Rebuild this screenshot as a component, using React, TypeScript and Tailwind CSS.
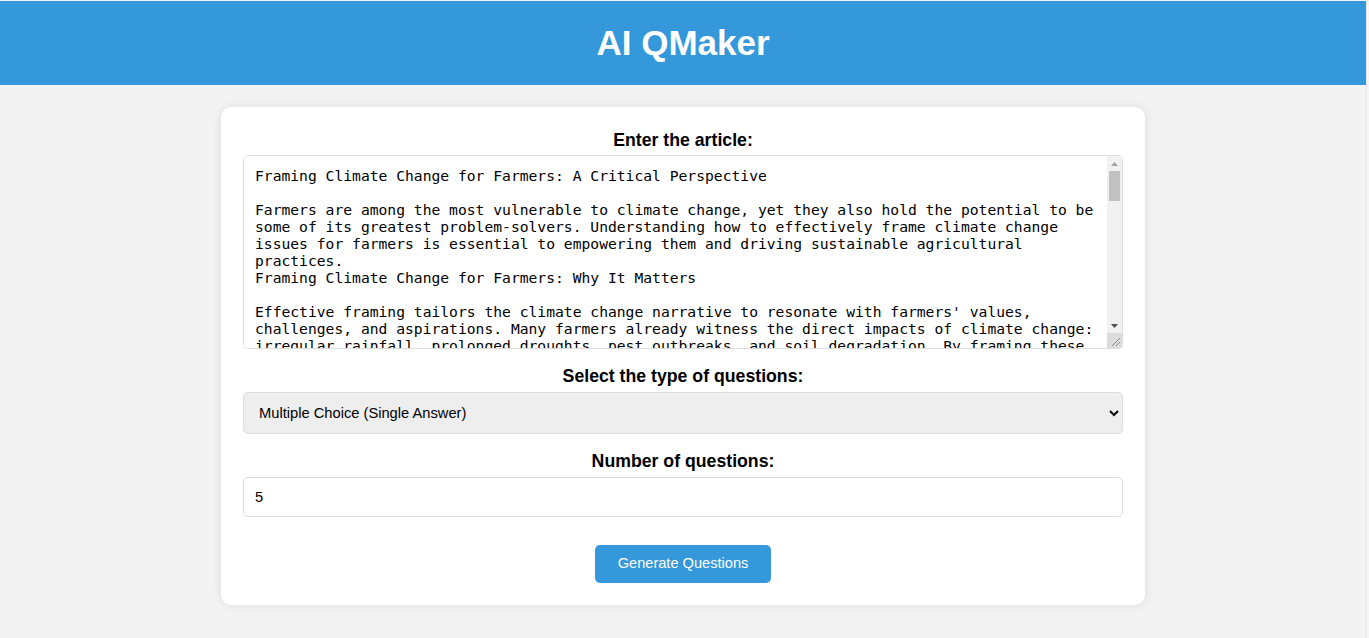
import { useState } from "react";

const article = `Framing Climate Change for Farmers: A Critical Perspective

Farmers are among the most vulnerable to climate change, yet they also hold the potential to be some of its greatest problem-solvers. Understanding how to effectively frame climate change issues for farmers is essential to empowering them and driving sustainable agricultural practices.
Framing Climate Change for Farmers: Why It Matters

Effective framing tailors the climate change narrative to resonate with farmers' values, challenges, and aspirations. Many farmers already witness the direct impacts of climate change: irregular rainfall, prolonged droughts, pest outbreaks, and soil degradation. By framing these experiences within the broader context of climate change, we can help farmers see the connection between their daily challenges and global trends.`;

// classic chrome-style scrollbar drawn over the textarea edge
function FakeScrollbar() {
  return (
    <div className="pointer-events-none absolute top-px right-px bottom-px flex w-[15px] flex-col bg-[#f1f1f1]">
      <div className="flex h-[15px] items-center justify-center">
        <svg width="7" height="4" viewBox="0 0 7 4">
          <path d="M0 4 L3.5 0 L7 4 Z" fill="#a3a3a3" />
        </svg>
      </div>
      <div className="flex-1">
        <div className="mx-[2px] h-[30px] bg-[#c1c1c1]" />
      </div>
      <div className="flex h-[15px] items-center justify-center">
        <svg width="7" height="4" viewBox="0 0 7 4">
          <path d="M0 0 L7 0 L3.5 4 Z" fill="#505050" />
        </svg>
      </div>
      <div className="relative h-[15px] bg-[#dcdcdc]">
        <svg className="absolute right-[2px] bottom-[2px]" width="8" height="8" viewBox="0 0 8 8">
          <path d="M8 0 L0 8 M8 4 L4 8" stroke="#8a8a8a" strokeWidth="1" />
        </svg>
      </div>
    </div>
  );
}

export default function App() {
  const [text, setText] = useState(article);
  const [kind, setKind] = useState("mcq-single");
  const [count, setCount] = useState("5");

  return (
    <div className="flex min-h-screen bg-[#f3f3f3] font-['Liberation_Sans',Arial,sans-serif]">
      <main className="w-[1366px]">
        <header className="mt-px flex h-[84px] items-center justify-center bg-[#3498db]">
          <h1 className="text-[35px] font-bold text-white">AI QMaker</h1>
        </header>

        <section className="mx-auto mt-[22px] w-[924px] rounded-[10px] bg-white p-[22px] shadow-[0_0_10px_rgba(0,0,0,0.1)]">
          <label className="mb-[4px] block pt-px text-center text-[17.7px] leading-[21px] font-bold text-black">
            Enter the article:
          </label>
          <div className="relative">
            <textarea
              value={text}
              onChange={(e) => setText(e.target.value)}
              className="block h-[194px] w-full rounded-[5px] border border-[#ddd] bg-white py-[11px] pr-[24px] pl-[11px] font-['DejaVu_Sans_Mono',monospace] text-[14.67px] leading-[17px] text-black outline-none"
            />
            <FakeScrollbar />
          </div>

          <label className="mt-[17px] mb-[5px] block text-center text-[17.7px] leading-[21px] font-bold text-black">
            Select the type of questions:
          </label>
          <select
            value={kind}
            onChange={(e) => setKind(e.target.value)}
            className="block h-[42px] w-full rounded-[5px] border border-[#ddd] bg-[#eee] pr-[10px] pl-[11px] text-[14.7px] text-black outline-none"
          >
            <option value="mcq-single">Multiple Choice (Single Answer)</option>
            <option value="mcq-multi">Multiple Choice (Multiple Answers)</option>
            <option value="tf">True / False</option>
            <option value="short">Short Answer</option>
          </select>

          <label className="mt-[17px] mb-[5px] block text-center text-[17.7px] leading-[21px] font-bold text-black">
            Number of questions:
          </label>
          <input
            type="text"
            value={count}
            onChange={(e) => setCount(e.target.value)}
            className="block h-[40px] w-full rounded-[5px] border border-[#ddd] bg-white pr-[10px] pl-[11px] text-[14.7px] text-black outline-none"
          />

          <div className="mt-[28px] flex justify-center">
            <button className="h-[38px] w-[176px] rounded-[5px] bg-[#3498db] text-[14.6px] text-white">
              Generate Questions
            </button>
          </div>
        </section>
      </main>
      <div className="w-[3px] border-l border-[#e8e8e8] bg-[#f7f7f7]" />
    </div>
  );
}
